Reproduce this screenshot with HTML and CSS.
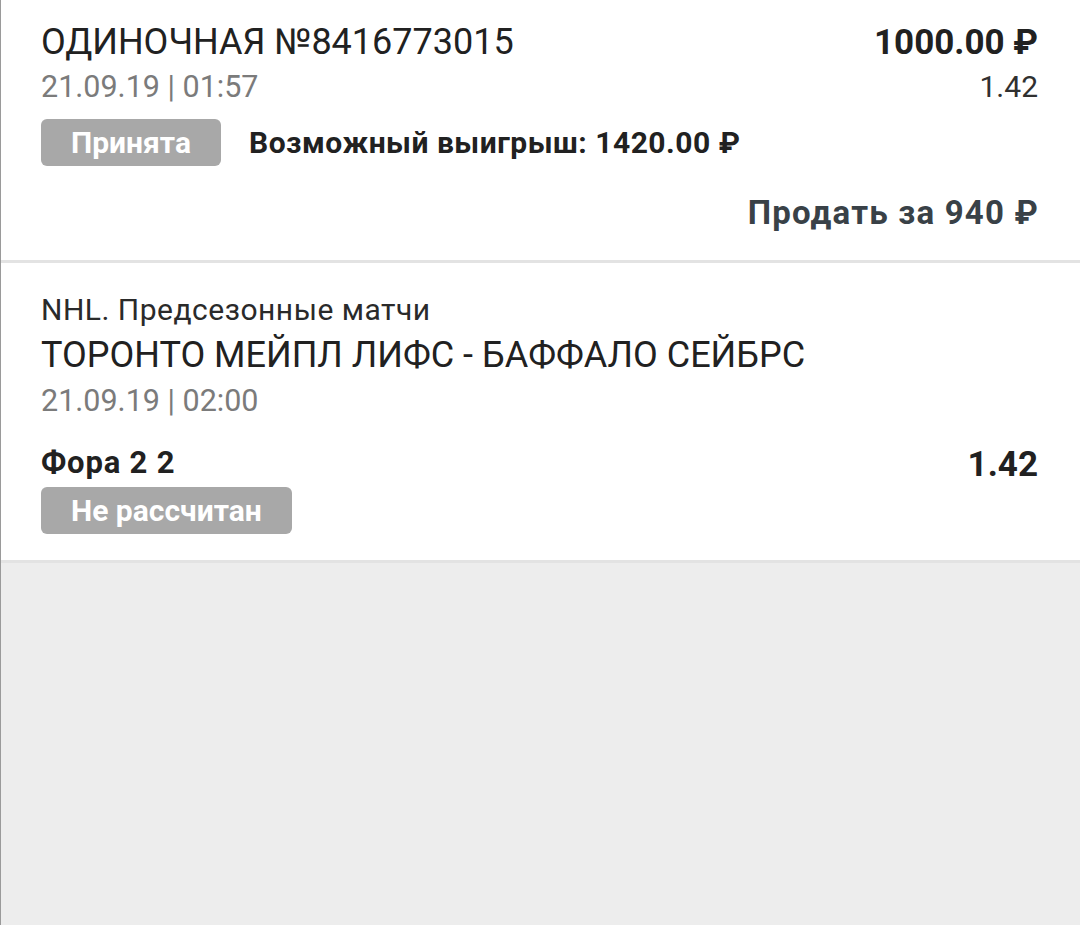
FILE: index.html
```html
<!DOCTYPE html>
<html lang="ru">
<head>
  <meta charset="UTF-8" />
  <meta name="viewport" content="width=device-width, initial-scale=1.0" />
  <title>Купон №8416773015</title>
  <link rel="stylesheet" href="styles.css">
</head>
<body>
  <div class="page">
    <div class="card bet-head">
      <div class="row">
        <span class="bet-title">ОДИНОЧНАЯ №8416773015</span>
        <span class="bet-sum">1000.00 ₽</span>
      </div>
      <div class="row row-date">
        <span class="muted">21.09.19 | 01:57</span>
        <span class="coef-small">1.42</span>
      </div>
      <div class="row-status">
        <span class="badge">Принята</span>
        <span class="win">Возможный выигрыш: 1420.00 ₽</span>
      </div>
      <div class="sell">Продать за 940 ₽</div>
    </div>

    <div class="card event">
      <div class="league">NHL. Предсезонные матчи</div>
      <div class="teams">ТОРОНТО МЕЙПЛ ЛИФС - БАФФАЛО СЕЙБРС</div>
      <div class="muted event-date">21.09.19 | 02:00</div>
      <div class="row row-outcome">
        <span class="outcome">Фора 2 2</span>
        <span class="coef">1.42</span>
      </div>
      <span class="badge badge-wide">Не рассчитан</span>
    </div>
  </div>
</body>
</html>
```

FILE: styles.css
```css
html, body {
  margin: 0;
  padding: 0;
}
body {
  font-family: Roboto, "Noto Sans", sans-serif;
  background: #ededed;
  color: #212121;
}
.page {
  min-height: 925px;
  border-left: 1px solid #9a9a9a;
  box-sizing: border-box;
}
.card {
  background: #fff;
  border-bottom: 3px solid #e3e3e3;
  padding: 0 42px 0 40px;
}
.row {
  display: flex;
  justify-content: space-between;
  align-items: baseline;
}

/* header of the bet */
.bet-head {
  padding-top: 20px;
  padding-bottom: 29px;
}
.bet-title {
  font-size: 36px;
  line-height: 44px;
}
.bet-sum {
  font-size: 35px;
  font-weight: bold;
}
.row-date {
  margin-top: 5px;
}
.muted {
  font-size: 30.5px;
  line-height: 36px;
  color: #7b7b7b;
}
.coef-small {
  font-size: 30px;
  color: #303030;
}
.row-status {
  display: flex;
  align-items: center;
  gap: 28px;
  margin-top: 14px;
}
.badge {
  display: inline-block;
  background: #a8a8a8;
  color: #fff;
  font-size: 30px;
  font-weight: bold;
  line-height: 47px;
  padding: 0 30px;
  border-radius: 6px;
}
.win {
  font-size: 30px;
  font-weight: bold;
  letter-spacing: 0.5px;
}
.sell {
  margin-top: 29px;
  margin-right: -1px;
  text-align: right;
  font-size: 33px;
  line-height: 36px;
  font-weight: bold;
  letter-spacing: 1.2px;
  color: #394147;
}

/* event */
.event {
  padding-top: 30px;
  padding-bottom: 26px;
}
.league {
  font-size: 30px;
  line-height: 34px;
  letter-spacing: 0.5px;
  color: #2a2a2a;
}
.teams {
  margin-top: 6px;
  font-size: 36px;
  line-height: 44px;
}
.event-date {
  margin-top: 6px;
}
.row-outcome {
  margin-top: 26px;
  align-items: flex-start;
}
.outcome {
  font-size: 31px;
  line-height: 36px;
  font-weight: bold;
  letter-spacing: 0.8px;
}
.coef {
  font-size: 35px;
  line-height: 36px;
  font-weight: bold;
  margin-top: 2px;
}
.badge-wide {
  margin-top: 4px;
}
```
